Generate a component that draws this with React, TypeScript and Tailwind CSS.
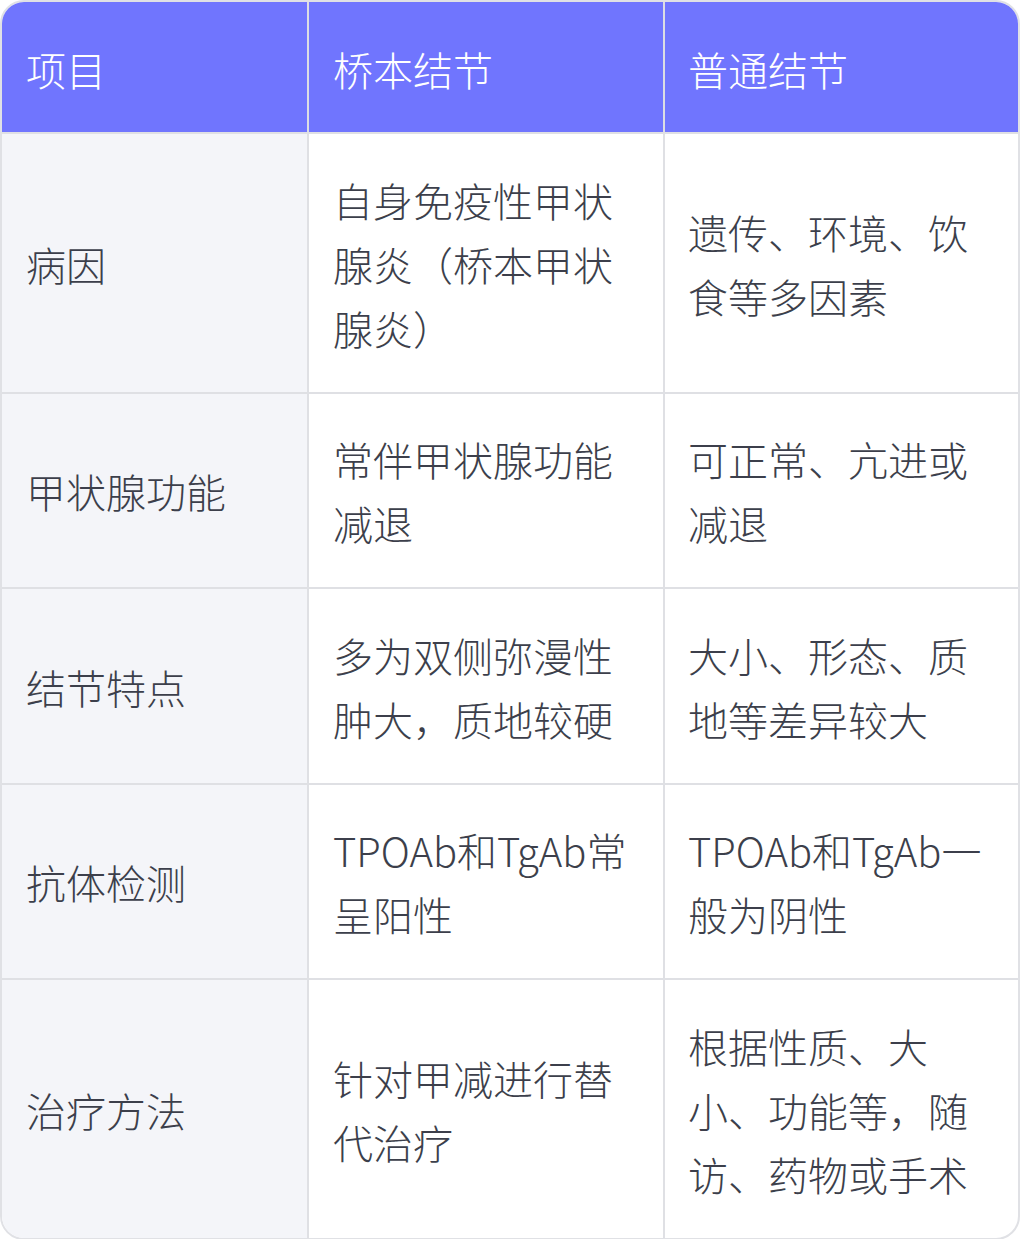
import React from 'react';

interface Row {
  item: string;
  hashimoto: string;
  normal: string;
}

const ROWS: Row[] = [
  { item: '病因', hashimoto: '自身免疫性甲状腺炎（桥本甲状腺炎）', normal: '遗传、环境、饮食等多因素' },
  { item: '甲状腺功能', hashimoto: '常伴甲状腺功能减退', normal: '可正常、亢进或减退' },
  { item: '结节特点', hashimoto: '多为双侧弥漫性肿大，质地较硬', normal: '大小、形态、质地等差异较大' },
  { item: '抗体检测', hashimoto: 'TPOAb和TgAb常呈阳性', normal: 'TPOAb和TgAb一般为阴性' },
  { item: '治疗方法', hashimoto: '针对甲减进行替代治疗', normal: '根据性质、大小、功能等，随访、药物或手术' }
];

const FONT = "font-['Noto_Sans_CJK_SC','Noto_Sans',sans-serif]";

const App: React.FC = () => {
  return (
    <div className={`w-[1020px] h-[1239px] bg-white ${FONT}`}>
      <div className="overflow-hidden rounded-[24px] border-2 border-[#e0e1e5] bg-white">
        <div className="grid grid-cols-[305px_2px_354px_2px_353px]">
          {/* header */}
          <div className="bg-[#7075fe] pl-[24px] pr-[20px] pt-[35px] pb-[31px] text-[40px] leading-[64px] font-light text-white">项目</div>
          <div className="bg-[#dcdde3]" />
          <div className="bg-[#7075fe] pl-[24px] pr-[20px] pt-[35px] pb-[31px] text-[40px] leading-[64px] font-light text-white">桥本结节</div>
          <div className="bg-[#dcdde3]" />
          <div className="bg-[#7075fe] pl-[23px] pr-[20px] pt-[35px] pb-[31px] text-[40px] leading-[64px] font-light text-white">普通结节</div>

          {ROWS.map((row) => (
            <React.Fragment key={row.item}>
              <div className="col-span-5 h-[2px] bg-[#dfe0e4]" />
              <div className="flex items-center bg-[#f4f5f9] pl-[24px] pr-[20px] pt-[33.5px] pb-[32px] text-[40px] leading-[64px] font-light text-[#3c3f4b]">
                {row.item}
              </div>
              <div className="bg-[#dfe0e4]" />
              <div className="flex items-center pl-[24px] pr-[22px] pt-[33.5px] pb-[32px] text-[40px] leading-[64px] font-light text-[#3c3f4b]">
                <span className="break-all">{row.hashimoto}</span>
              </div>
              <div className="bg-[#dfe0e4]" />
              <div className="flex items-center pl-[23px] pr-[22px] pt-[33.5px] pb-[32px] text-[40px] leading-[64px] font-light text-[#3c3f4b]">
                <span className="break-all">{row.normal}</span>
              </div>
            </React.Fragment>
          ))}
        </div>
      </div>
    </div>
  );
};

export default App;
